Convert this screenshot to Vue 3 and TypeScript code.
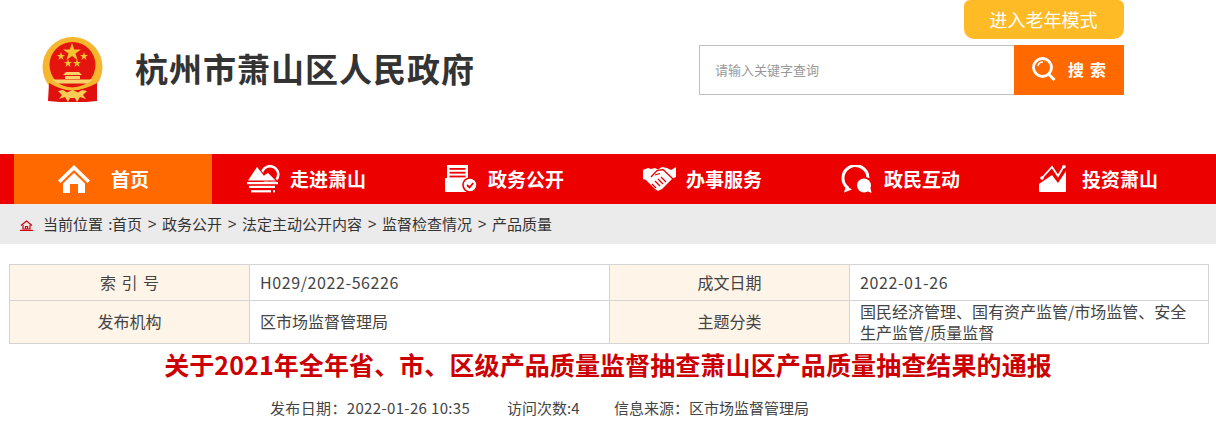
<script setup lang="ts">
const navItems = [
  { label: '首页', icon: 'home', active: true },
  { label: '走进萧山', icon: 'mount', active: false },
  { label: '政务公开', icon: 'doc', active: false },
  { label: '办事服务', icon: 'hands', active: false },
  { label: '政民互动', icon: 'chat', active: false },
  { label: '投资萧山', icon: 'chart', active: false },
]
const crumbs = ['政务公开', '法定主动公开内容', '监督检查情况', '产品质量']
</script>

<template>
  <div class="page">
    <header class="header">
      <div class="brand">
        <svg class="emblem" width="62" height="66" viewBox="0 0 62 66">
          <circle cx="30.5" cy="30" r="30" fill="#f6b62e" />
          <circle cx="30.5" cy="28" r="23" fill="#e3150e" />
          <path d="M7 46 Q30 60 55 46 L55 64 L44 65 H18 L6 64 Z" fill="#e0100f" />
          <polygon points="30,6 32.2,12.5 39,12.5 33.5,16.5 35.6,23 30,19 24.4,23 26.5,16.5 21,12.5 27.8,12.5" fill="#f7c431" />
          <polygon points="19,15 20,18 23,18 20.6,19.8 21.5,23 19,21 16.5,23 17.4,19.8 15,18 18,18" fill="#f7c431" />
          <polygon points="42,15 43,18 46,18 43.6,19.8 44.5,23 42,21 39.5,23 40.4,19.8 38,18 41,18" fill="#f7c431" />
          <polygon points="26,22 27,25 30,25 27.6,26.8 28.5,30 26,28 23.5,30 24.4,26.8 22,25 25,25" fill="#f7c431" />
          <polygon points="35,22 36,25 39,25 36.6,26.8 37.5,30 35,28 32.5,30 33.4,26.8 31,25 34,25" fill="#f7c431" />
          <path d="M21 38 L24 35 H37 L40 38 Z M23 39 H38 V42 H23 Z M11 42.5 H50 V46.5 H11 Z" fill="#f9d26a" />
          <path d="M8 43 Q30 61 53 43" fill="none" stroke="#f6b62e" stroke-width="3" />
          <path d="M16 54 L21 53 L25 55.5 L30.5 53 L36 55.5 L40 53 L45 54 L41 58 L44 62 L38 60 L35 65 L33 61 H28 L26 65 L23 60 L17 62 L20 58 Z" fill="#f9cc55" />
        </svg>
        <h1 class="site-title">杭州市萧山区人民政府</h1>
      </div>
      <div class="tools">
        <a class="elder">进入老年模式</a>
        <div class="search">
          <div class="search-input">请输入关键字查询</div>
          <div class="search-btn">
            <svg width="24" height="24" viewBox="0 0 24 24" fill="none" stroke="#fff">
              <circle cx="10.5" cy="10.5" r="9" stroke-width="2.8" />
              <path d="M16.5 17 L22.5 23" stroke-width="3" />
              <path d="M6 9 A5 5 0 0 1 11 5" stroke-width="1.5" />
            </svg>
            <span class="search-text">搜索</span>
          </div>
        </div>
      </div>
    </header>

    <nav class="nav">
      <div v-for="item in navItems" :key="item.label" class="nav-item" :class="{ active: item.active }">
        <span class="nav-icon">
          <svg v-if="item.icon === 'home'" width="32" height="28" viewBox="0 0 32 28" fill="#fff">
            <path d="M16 0 L32 15.5 L29.5 18 L16 5 L2.5 18 L0 15.5 Z" />
            <path d="M16 8 L27 18.5 V28 H20 V19 H12 V28 H5 V18.5 Z" />
          </svg>
          <svg v-else-if="item.icon === 'mount'" width="33" height="28" viewBox="0 0 33 28" fill="#fff">
            <circle cx="23" cy="9.5" r="8.3" fill="none" stroke="#fff" stroke-width="2.6" />
            <path d="M0 16 L10 1 L17 10 L21 7 L30 16 Z" stroke="#ec0000" stroke-width="1.2" />
            <rect x="0" y="17" width="31" height="2.2" />
            <rect x="2" y="20.8" width="26" height="2.2" />
            <rect x="4" y="25.2" width="20" height="2.2" />
            <rect x="26" y="25.2" width="2" height="2.2" />
          </svg>
          <svg v-else-if="item.icon === 'doc'" width="35" height="28" viewBox="0 0 35 28" fill="#fff">
            <rect x="2" y="0" width="21" height="15" />
            <rect x="4.5" y="3" width="16" height="1.8" fill="#ec0000" />
            <rect x="4.5" y="6.8" width="16" height="1.8" fill="#ec0000" />
            <rect x="4.5" y="10.6" width="16" height="1.8" fill="#ec0000" />
            <rect x="0" y="13" width="26" height="14" rx="1" />
            <circle cx="25" cy="20" r="7.8" fill="#ec0000" />
            <circle cx="25" cy="20" r="6.2" />
            <path d="M22 20 L24.5 22.5 L28.3 18" fill="none" stroke="#ec0000" stroke-width="1.8" />
          </svg>
          <svg v-else-if="item.icon === 'hands'" width="34" height="28" viewBox="0 0 34 26" fill="#fff">
            <path d="M0 4 L5 2 L8 3 L12 2 L15 3.5 L19 1 L24 2 L28 4 L33 1 V11 L29 13 L19 23 L15 25 L12 23 L10 21 L3 14 L0 13 Z" />
            <path d="M8 11 L14 4.5 L20 3.5 L30 13 M12 15 L17 20 M15 13 L20 18 M18 11 L23 16 M9 18 L13 22 M12 9 L17 7.5" fill="none" stroke="#ec0000" stroke-width="1.3" />
          </svg>
          <svg v-else-if="item.icon === 'chat'" width="32" height="28" viewBox="0 0 32 28" fill="#fff">
            <path d="M7.5 23.5 A12.5 12.5 0 1 1 27 13" fill="none" stroke="#fff" stroke-width="3" />
            <path d="M3 27.5 L5 21 L11 24.5 Z" />
            <circle cx="23" cy="20.5" r="8.8" fill="#ec0000" />
            <circle cx="23" cy="20.5" r="7" />
            <path d="M26 26 L30.5 28 L29.5 23 Z" />
          </svg>
          <svg v-else width="28" height="28" viewBox="0 0 28 28" fill="#fff">
            <path d="M0 19 L13 10 L19 18 L27 6 V26 A1 1 0 0 1 26 27 H1 A1 1 0 0 1 0 26 Z" />
            <path d="M3 13 L13 2 L19 11 L25 1" fill="none" stroke="#ec0000" stroke-width="4" />
            <path d="M3 13 L13 2 L19 11 L25 1" fill="none" stroke="#fff" stroke-width="1.8" />
            <circle cx="3" cy="13" r="1.8" />
            <circle cx="25" cy="1.8" r="1.8" />
          </svg>
        </span>
        <span class="nav-label">{{ item.label }}</span>
      </div>
    </nav>

    <div class="crumbs">
      <svg class="crumb-icon" width="13" height="11" viewBox="0 0 13 11" fill="none" stroke="#d0000a" stroke-width="1.2">
        <path d="M1 5.5 L6.5 1 L12 5.5" />
        <path d="M3 5 V9 H10 V5 M5.5 9 V6.5 H7.5 V9" />
        <path d="M0 10.4 H13" />
      </svg>
      <span class="crumb-label">当前位置 :</span><span>首页</span>
      <template v-for="c in crumbs" :key="c">
        <span class="sep">&gt;</span><span>{{ c }}</span>
      </template>
    </div>

    <section class="meta">
      <div class="cell label spaced">索 引 号</div>
      <div class="cell value num">H029/2022-56226</div>
      <div class="cell label">成文日期</div>
      <div class="cell value num">2022-01-26</div>
      <div class="cell label">发布机构</div>
      <div class="cell value">区市场监督管理局</div>
      <div class="cell label">主题分类</div>
      <div class="cell value multi">国民经济管理、国有资产监管/市场监管、安全生产监管/质量监督</div>
    </section>

    <h2 class="title">关于2021年全年省、市、区级产品质量监督抽查萧山区产品质量抽查结果的通报</h2>
    <div class="info">
      <span class="info-date">发布日期：2022-01-26 10:35</span>
      <span class="info-visits">访问次数:4</span>
      <span>信息来源：区市场监督管理局</span>
    </div>
  </div>
</template>

<style>
html, body { margin: 0; background: #fff; }
</style>

<style scoped>
.page {
  width: 1216px;
  height: 428px;
  overflow: hidden;
  font-family: "Noto Sans CJK SC", "Liberation Sans", sans-serif;
  color: #333;
}
.header {
  height: 154px;
  display: flex;
  justify-content: space-between;
}
.brand {
  display: flex;
  align-items: flex-start;
  padding: 37px 0 0 42px;
}
.emblem { display: block; }
.site-title {
  margin: 6px 0 0 31px;
  font-size: 33px;
  line-height: 50px;
  font-weight: 700;
  color: #333;
  letter-spacing: 1px;
}
.tools {
  width: 425px;
  margin-right: 92px;
  display: flex;
  flex-direction: column;
  align-items: flex-end;
}
.elder {
  box-sizing: border-box;
  width: 160px;
  height: 39px;
  padding-right: 1px;
  background: #ffbb25;
  border-radius: 6px 6px 10px 10px;
  color: #fff;
  font-size: 18px;
  line-height: 39px;
  text-align: center;
}
.search {
  margin-top: 6px;
  width: 425px;
  height: 50px;
  display: flex;
}
.search-input {
  flex: 1;
  box-sizing: border-box;
  border: 1px solid #bfbfbf;
  border-right: none;
  padding-left: 15px;
  font-size: 13px;
  line-height: 47px;
  color: #999;
}
.search-btn {
  width: 110px;
  background: #ff6900;
  display: flex;
  align-items: center;
  padding-left: 18px;
  box-sizing: border-box;
  color: #fff;
}
.search-btn svg { margin-top: -2px; }
.search-text {
  margin-left: 12px;
  margin-top: -3px;
  font-size: 16px;
  font-weight: 700;
  letter-spacing: 6px;
  white-space: nowrap;
}
.nav {
  height: 50px;
  background: #ec0000;
  padding-left: 14px;
  display: flex;
}
.nav-item {
  box-sizing: border-box;
  width: 198px;
  height: 50px;
  padding-left: 35px;
  display: flex;
  align-items: center;
  color: #fff;
}
.nav-item.active { background: #ff6900; padding-left: 44px; }
.nav-icon { display: block; width: 43px; height: 28px; flex: none; }
.nav-icon svg { display: block; }
.active .nav-icon { width: 53px; }
.nav-label {
  font-size: 19px;
  font-weight: 700;
  white-space: nowrap;
  margin-top: -1px;
}
.crumbs {
  height: 40px;
  box-sizing: border-box;
  padding: 0 0 1px 20px;
  background: #ebebeb;
  display: flex;
  align-items: center;
  font-size: 15px;
  color: #333;
}
.crumb-icon { margin-right: 10px; margin-top: 3px; }
.crumb-label { width: 69px; white-space: pre; word-spacing: 2px; }
.sep { width: 10px; margin: 0 5px; text-align: center; font-family: "Liberation Sans", sans-serif; }
.meta {
  margin: 20px 7px 0 9px;
  display: grid;
  grid-template-columns: 240px 360px 240px 1fr;
  grid-template-rows: 36px 43px;
  border-top: 1px solid #d4d4d4;
  border-left: 1px solid #d4d4d4;
  font-size: 16px;
}
.cell {
  box-sizing: border-box;
  padding-bottom: 2px;
  border-right: 1px solid #d4d4d4;
  border-bottom: 1px solid #d4d4d4;
  display: flex;
  align-items: center;
}
.label { background: #fff4e8; justify-content: center; color: #444; }
.spaced { word-spacing: 2px; white-space: pre; }
.value { padding-left: 10px; padding-right: 10px; color: #444; }
.num { letter-spacing: .6px; }
.multi { line-height: 21px; align-items: flex-start; padding-bottom: 0; }
.title {
  margin: 0;
  height: 44px;
  text-align: center;
  font-size: 25px;
  line-height: 41px;
  font-weight: 700;
  letter-spacing: .1px;
  color: #cc0000;
}
.info {
  padding: 10px 0 0 270px;
  font-size: 15px;
  line-height: 20px;
  color: #444;
  display: flex;
  white-space: nowrap;
}
.info-date { width: 237px; letter-spacing: .35px; }
.info-visits { width: 107px; }
</style>
